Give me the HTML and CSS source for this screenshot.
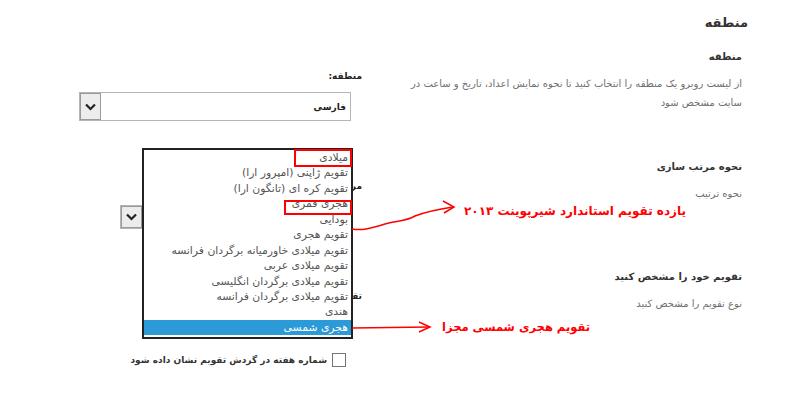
FILE: index.html
```html
<!DOCTYPE html>
<html lang="fa" dir="rtl">
<head>
<meta charset="utf-8">
<title>منطقه</title>
<link rel="stylesheet" href="styles.css">
</head>
<body>
<div class="page">
  <h1 class="page-title">منطقه</h1>

  <section class="row">
    <div class="info">
      <h2 class="info-title">منطقه</h2>
      <p class="info-desc">از لیست روبرو یک منطقه را انتخاب کنید تا نحوه نمایش اعداد، تاریخ و ساعت در<br>سایت مشخص شود</p>
    </div>
    <div class="control">
      <div class="ctl-label">منطقه:</div>
      <div class="select select-wide">
        <span class="select-value">فارسی</span>
        <span class="select-btn"><svg width="11" height="8" viewBox="0 0 11 8"><polyline points="1,1.5 5.5,6 10,1.5" fill="none" stroke="#222" stroke-width="2.2"/></svg></span>
      </div>
    </div>
  </section>

  <section class="row">
    <div class="info">
      <h2 class="info-title">نحوه مرتب سازی</h2>
      <p class="info-desc">نحوه ترتیب</p>
    </div>
    <div class="control">
      <div class="ctl-label">مرتب سازی:</div>
      <div class="select select-narrow">
        <span class="select-value">عمومی</span>
        <span class="select-btn"><svg width="11" height="8" viewBox="0 0 11 8"><polyline points="1,1.5 5.5,6 10,1.5" fill="none" stroke="#222" stroke-width="2.2"/></svg></span>
      </div>
    </div>
  </section>

  <section class="row">
    <div class="info">
      <h2 class="info-title">تقویم خود را مشخص کنید</h2>
      <p class="info-desc">نوع تقویم را مشخص کنید</p>
    </div>
    <div class="control">
      <div class="ctl-label">تقویم:</div>
      <div class="select select-cal">
        <span class="select-value">هجری شمسی</span>
        <span class="select-btn"><svg width="11" height="8" viewBox="0 0 11 8"><polyline points="1,1.5 5.5,6 10,1.5" fill="none" stroke="#222" stroke-width="2.2"/></svg></span>
      </div>
      <label class="check-row"><span class="check-box"></span><span class="check-text">شماره هفته در گردش تقویم نشان داده شود</span></label>
    </div>
  </section>
</div>

<ul class="dropdown">
  <li>میلادی</li>
  <li>تقویم ژاپنی (امپرور ارا)</li>
  <li>تقویم کره ای (تانگون ارا)</li>
  <li>هجری قمری</li>
  <li>بودایی</li>
  <li>تقویم هجری</li>
  <li>تقویم میلادی خاورمیانه برگردان فرانسه</li>
  <li>تقویم میلادی عربی</li>
  <li>تقویم میلادی برگردان انگلیسی</li>
  <li>تقویم میلادی برگردان فرانسه</li>
  <li>هندی</li>
  <li class="selected">هجری شمسی</li>
</ul>

<div class="mark mark-1"></div>
<div class="mark mark-2"></div>

<svg class="arrows" width="800" height="400" viewBox="0 0 800 400">
  <path d="M352 229 C362 231 372 228 385 224 C398 220 404 222 415 216 C428 211 440 209 453 207" fill="none" stroke="#f00" stroke-width="1.5"/>
  <path d="M443 201 L454 207 L444 213" fill="none" stroke="#f00" stroke-width="1.5"/>
  <path d="M352 328 L429 327" fill="none" stroke="#f00" stroke-width="1.5"/>
  <path d="M419 322 L430 327 L419 332" fill="none" stroke="#f00" stroke-width="1.5"/>
</svg>

<div class="note note-1">یازده تقویم استاندارد شیرپوینت ۲۰۱۳</div>
<div class="note note-2">تقویم هجری شمسی مجزا</div>
</body>
</html>
```

FILE: styles.css
```css
* { box-sizing: border-box; margin: 0; padding: 0; }

body {
  margin: 0;
  width: 800px;
  height: 400px;
  overflow: hidden;
  position: relative;
  background: #fff;
  color: #333;
  font-family: "DejaVu Sans", sans-serif;
}

.page { padding: 13px 52px 0 0; }

.page-title {
  font-size: 13px;
  font-weight: bold;
  line-height: 20px;
  margin-bottom: 17px;
  color: #333;
}

.row {
  display: flex;
  gap: 45px;
  height: 110px;
  padding-right: 6px;
}

.info { width: 335px; }

.info-title {
  font-size: 10px;
  font-weight: bold;
  line-height: 14px;
  color: #333;
}

.info-desc {
  margin-top: 10px;
  font-size: 10px;
  line-height: 19px;
  color: #707070;
  white-space: nowrap;
}

.control { width: 283px; padding-top: 19px; }

.ctl-label {
  font-size: 9px;
  font-weight: bold;
  line-height: 14px;
  color: #222;
}

.select {
  display: flex;
  align-items: stretch;
  margin-right: 11px;
  border: 1px solid #b5b5b5;
  background: #fff;
}

.select-wide { width: 272px; height: 29px; margin-top: 9px; }
.select-narrow { width: 231px; height: 24px; margin-top: 12px; }
.select-cal { width: 190px; height: 24px; margin-top: 10px; }

.select-value {
  flex: 1;
  display: flex;
  align-items: center;
  padding-right: 4px;
  font-size: 9px;
  font-weight: bold;
  color: #222;
}

.select-btn {
  width: 21px;
  display: flex;
  align-items: center;
  justify-content: center;
  background: #ececec;
  border: 1px solid #9a9a9a;
}

.check-row {
  display: flex;
  align-items: center;
  gap: 5px;
  margin-top: 16px;
  margin-right: 16px;
}

.check-box {
  width: 14px;
  height: 14px;
  border: 1px solid #777;
  background: #fff;
}

.check-text {
  font-size: 9px;
  font-weight: bold;
  color: #333;
}

.dropdown {
  position: absolute;
  left: 142px;
  top: 148px;
  width: 211px;
  height: 191px;
  list-style: none;
  background: #fff;
  border: 2px solid #222;
}

.dropdown li {
  height: 15.45px;
  line-height: 15.45px;
  padding-right: 3px;
  font-size: 10.8px;
  color: #555;
  white-space: nowrap;
}

.dropdown li.selected {
  background: #2b9ad6;
  color: #fff;
}

.mark {
  position: absolute;
  border: 2px solid #f00;
}

.mark-1 { left: 294px; top: 149px; width: 58px; height: 18px; }
.mark-2 { left: 284px; top: 200px; width: 68px; height: 15px; }

.arrows {
  position: absolute;
  left: 0;
  top: 0;
  pointer-events: none;
}

.note {
  position: absolute;
  font-weight: bold;
  line-height: 18px;
  color: #f00;
  white-space: nowrap;
}

.note-1 { right: 114px; top: 202px; font-size: 12px; }
.note-2 { right: 210px; top: 318px; font-size: 11.5px; }
```
